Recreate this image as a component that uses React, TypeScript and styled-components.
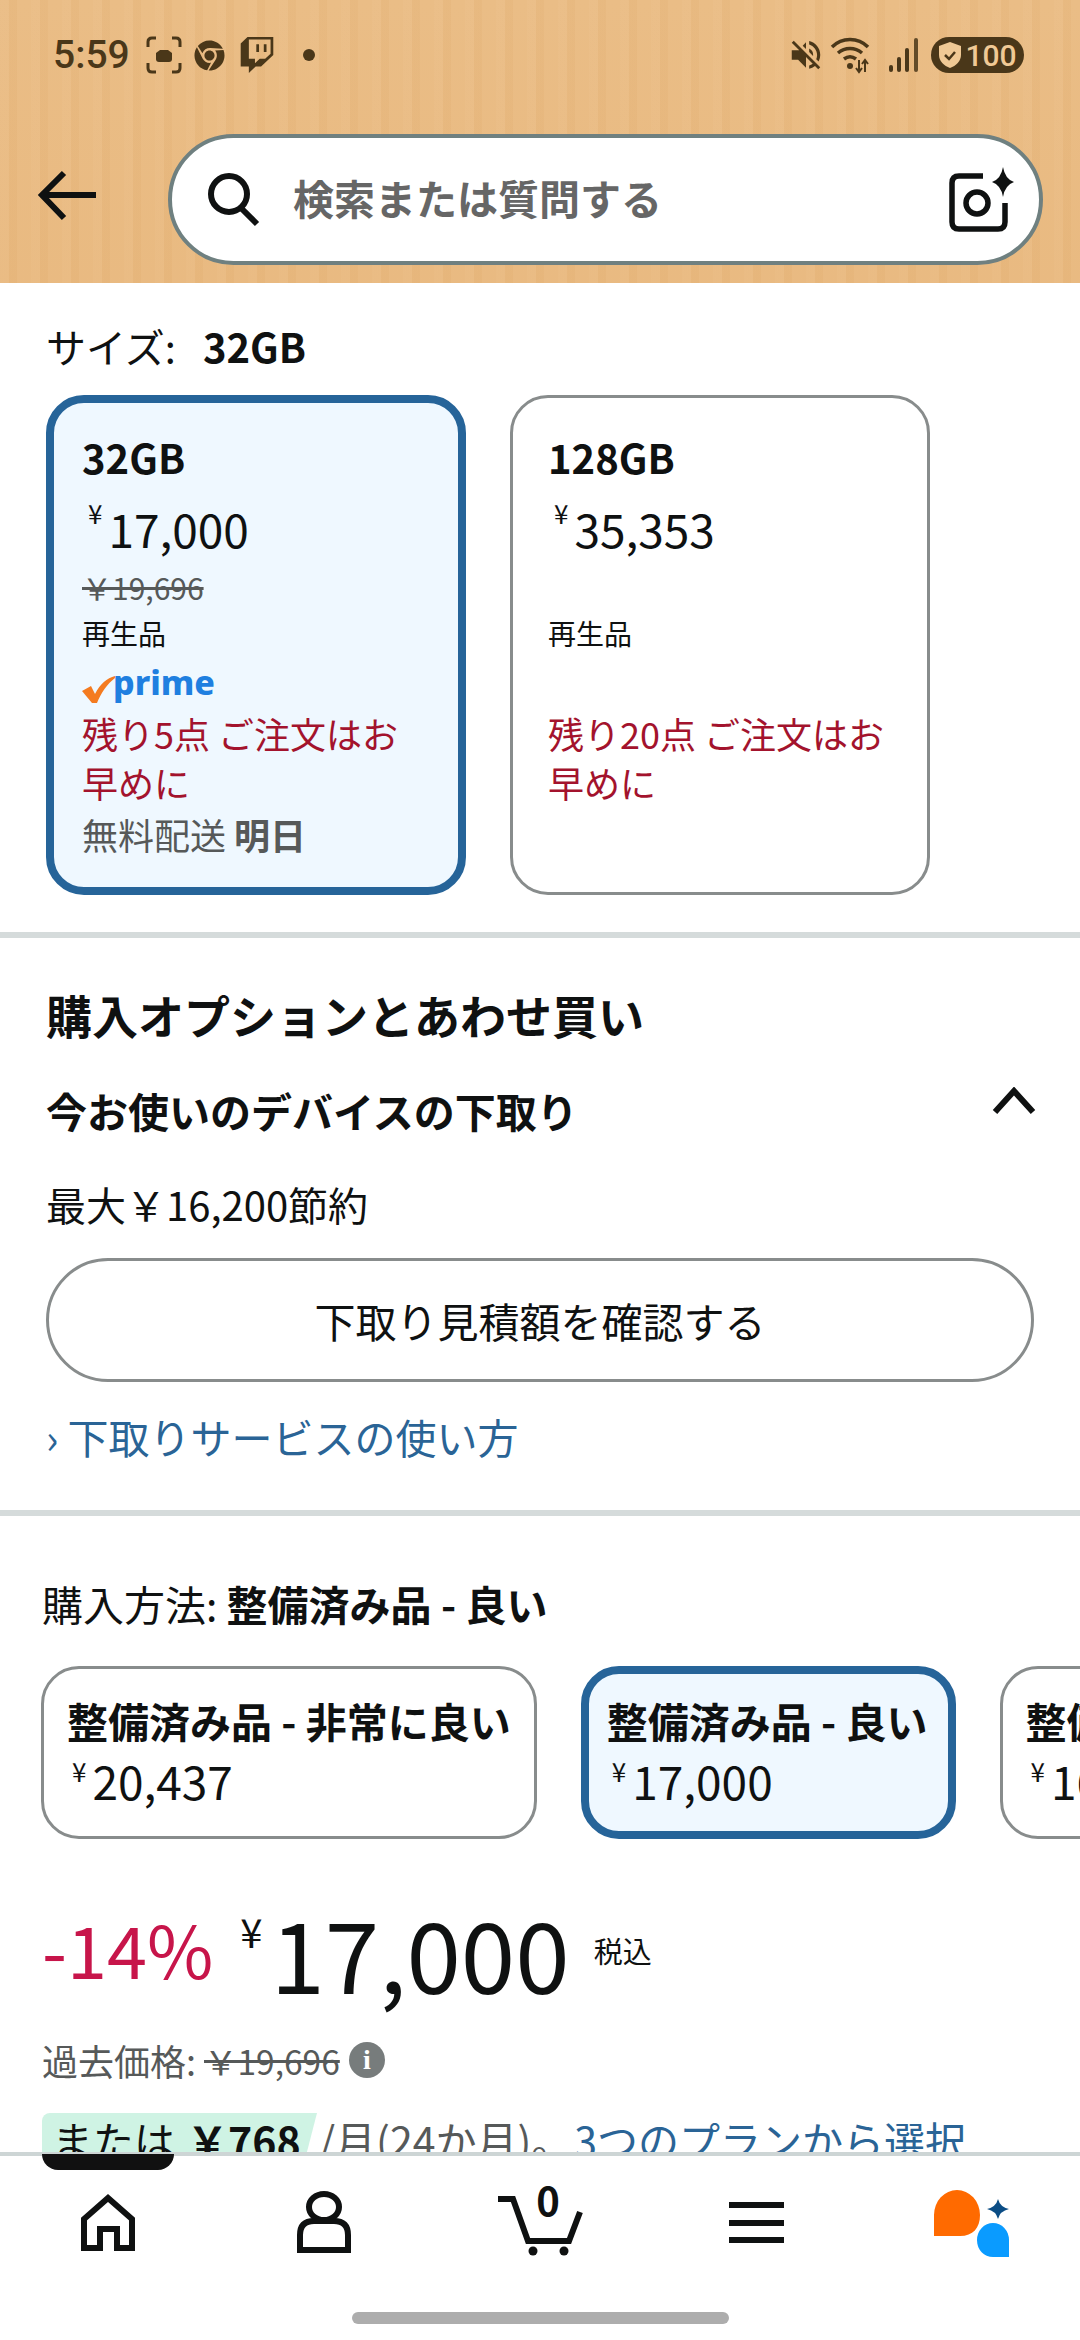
import React from "react";
import styled, { createGlobalStyle } from "styled-components";
import { FaChrome, FaTwitch } from "react-icons/fa";
import { MdVolumeOff } from "react-icons/md";

const GlobalStyle = createGlobalStyle`
  html, body {
    margin: 0;
    padding: 0;
    background: #fff;
  }
  * {
    box-sizing: border-box;
  }
`;

const Page = styled.div`
  width: 1080px;
  height: 2340px;
  display: flex;
  flex-direction: column;
  overflow: hidden;
  position: relative;
  background: #fff;
  color: #0f1111;
  font-family: "Noto Sans CJK JP", "Noto Sans", sans-serif;
`;

/* header */
const Header = styled.header`
  height: 283px;
  flex: none;
  background:
    repeating-linear-gradient(90deg, rgba(255, 255, 255, 0.04) 0 9px, rgba(160, 100, 30, 0.03) 9px 17px, rgba(255, 255, 255, 0.02) 17px 31px),
    linear-gradient(180deg, #eabc84 0%, #e9b97f 100%);
`;

const StatusBar = styled.div`
  height: 134px;
  padding: 36px 56px 0 53px;
  display: flex;
  align-items: flex-start;
  justify-content: space-between;
  color: #4a3719;
`;

const StatusGroup = styled.div`
  display: flex;
  align-items: center;
  height: 38px;
`;

const Clock = styled.span`
  font-family: "Roboto", sans-serif;
  font-size: 39px;
  font-weight: 500;
  line-height: 38px;
  margin-right: 16px;
`;

const Dot = styled.span`
  width: 12px;
  height: 12px;
  border-radius: 50%;
  background: #4a3719;
  margin-left: 28px;
`;

const StatusGap = styled.span<{ $width: number }>`
  width: ${(p) => p.$width}px;
`;

const BatteryPill = styled.div`
  width: 93px;
  height: 36px;
  margin-left: 12px;
  border-radius: 18px;
  background: #4a3719;
  color: #f0c995;
  display: flex;
  align-items: center;
  justify-content: center;
  gap: 3px;
  font-family: "Roboto", sans-serif;
  font-size: 30px;
  font-weight: 500;
`;

const SearchRow = styled.div`
  display: flex;
  align-items: center;
  padding-left: 36px;
  gap: 70px;
`;

const SearchBox = styled.div`
  width: 875px;
  height: 131px;
  margin-left: -2px;
  border: 4px solid #6f8080;
  border-radius: 66px;
  background: #fff;
  display: flex;
  align-items: center;
  padding: 0 24px 0 36px;
`;

const SearchText = styled.span`
  margin: 0 0 6px 33px;
  flex: 1;
  font-size: 41px;
  font-weight: 700;
  color: #666;
  line-height: 50px;
`;

/* size section */
const SizeSection = styled.section`
  padding: 43px 46px 37px;
  flex: none;
`;

const SizeLabel = styled.div`
  font-size: 40px;
  line-height: 40px;
  display: flex;
  gap: 27px;
`;

const Strong = styled.span`
  font-weight: 700;
`;

const SizeCards = styled.div`
  margin-top: 29px;
  display: flex;
  gap: 44px;
`;

const SizeCard = styled.div<{ $selected?: boolean }>`
  width: 420px;
  height: 500px;
  border-radius: 38px;
  border: ${(p) => (p.$selected ? "8px solid #266499" : "3px solid #888c8c")};
  background: ${(p) => (p.$selected ? "#eff8ff" : "#fff")};
  padding: ${(p) => (p.$selected ? "26px 30px 0 28px" : "31px 30px 0 35px")};
`;

const SizeName = styled.div`
  font-size: 40px;
  font-weight: 700;
  line-height: 56px;
`;

const PriceLine = styled.div`
  display: flex;
  align-items: flex-start;
  height: 86px;
  font-size: 46px;
  line-height: 86px;
  padding-left: 6px;
`;

const Yen = styled.span`
  font-size: 26px;
  line-height: 56px;
  margin-right: 6px;
`;

const OldPrice = styled.div`
  height: 28px;
  margin-top: 2px;
  font-size: 30px;
  line-height: 28px;
  color: #565959;
  text-decoration: line-through;
`;

const Condition = styled.div`
  height: 64px;
  font-size: 28px;
  line-height: 64px;
`;

const PrimeRow = styled.div`
  height: 38px;
  margin-top: 2px;
  display: flex;
`;

const Stock = styled.div`
  margin-top: 4px;
  font-size: 36px;
  line-height: 49px;
  color: #a3132d;
`;

const Delivery = styled.div`
  margin-top: 2px;
  font-size: 36px;
  line-height: 50px;
  color: #565959;
`;

const Divider = styled.div`
  height: 6px;
  flex: none;
  background: #d5dbdb;
`;

/* trade-in section */
const TradeSection = styled.section`
  padding: 48px 46px 49px;
  flex: none;
`;

const SectionTitle = styled.h2`
  margin: 0;
  font-size: 46px;
  font-weight: 700;
  line-height: 56px;
`;

const TradeHead = styled.div`
  margin-top: 43px;
  display: flex;
  justify-content: space-between;
  align-items: flex-start;
  font-size: 41px;
  font-weight: 700;
  line-height: 50px;
`;

const Saving = styled.div`
  margin-top: 44px;
  font-size: 40px;
  line-height: 50px;
`;

const TradeButton = styled.div`
  margin-top: 29px;
  height: 124px;
  border: 3px solid #888c8c;
  border-radius: 62px;
  display: flex;
  align-items: center;
  justify-content: center;
  font-size: 41px;
`;

const HelpLink = styled.div`
  margin-top: 29px;
  font-size: 41px;
  line-height: 50px;
  color: #2a6496;
`;

/* buying options */
const BuySection = styled.section`
  padding-top: 62px;
  flex: none;
`;

const BuyLabel = styled.div`
  padding-left: 42px;
  font-size: 41px;
  line-height: 50px;
`;

const BuyCards = styled.div`
  margin-top: 38px;
  padding-left: 41px;
  display: flex;
  gap: 44px;
`;

const BuyCard = styled.div<{ $selected?: boolean }>`
  flex: none;
  height: 173px;
  border-radius: 38px;
  border: ${(p) => (p.$selected ? "8px solid #266499" : "3px solid #888c8c")};
  background: ${(p) => (p.$selected ? "#eff8ff" : "#fff")};
  padding: ${(p) => (p.$selected ? "21px 20px 0 18px" : "26px 23px 0 23px")};
`;

const BuyName = styled.div`
  font-size: 41px;
  font-weight: 700;
  line-height: 50px;
  white-space: nowrap;
`;

const BuyPrice = styled.div`
  margin-top: 5px;
  padding-left: 5px;
  display: flex;
  align-items: flex-start;
  font-size: 46px;
  line-height: 60px;
`;

const BuyYen = styled.span`
  font-size: 26px;
  line-height: 42px;
  margin-right: 6px;
`;

/* main price */
const PriceRow = styled.div`
  margin-top: 51px;
  padding-left: 42px;
  display: flex;
  align-items: flex-start;
  height: 122px;
`;

const Discount = styled.span`
  font-size: 72px;
  line-height: 90px;
  margin-top: 13px;
  color: #c7154a;
`;

const BigYen = styled.span`
  font-size: 40px;
  line-height: 50px;
  margin: 16px 8px 0 27px;
`;

const BigPrice = styled.span`
  font-size: 98px;
  line-height: 122px;
`;

const TaxNote = styled.span`
  font-size: 29px;
  line-height: 40px;
  margin: 40px 0 0 24px;
`;

const ListPriceRow = styled.div`
  margin-top: 23px;
  padding-left: 42px;
  display: flex;
  align-items: center;
  height: 50px;
  font-size: 36px;
  color: #565959;
`;

const Struck = styled.span`
  margin-left: 8px;
  font-size: 33.5px;
  text-decoration: line-through;
`;

const InfoBadge = styled.span`
  width: 36px;
  height: 36px;
  margin-left: 9px;
  border-radius: 50%;
  background: #777c7c;
  color: #fff;
  display: flex;
  align-items: center;
  justify-content: center;
  font-family: "Liberation Serif", serif;
  font-size: 28px;
  font-weight: 700;
`;

const InstallmentRow = styled.div`
  margin-top: 28px;
  padding-left: 42px;
  display: flex;
  align-items: flex-start;
  white-space: nowrap;
  font-size: 41px;
  line-height: 50px;
  color: #565959;
`;

const GreenTag = styled.span`
  height: 64px;
  width: 275px;
  padding: 1px 0 0 10px;
  background: #cff3e4;
  color: #0f1111;
  border-radius: 8px 0 0 0;
  clip-path: polygon(0 0, 100% 0, 94% 100%, 0 100%);
  display: flex;
  gap: 12px;
`;

const PlanLink = styled.span`
  color: #2a6496;
`;

const MonthText = styled.span`
  margin: 1px 0 0 2px;
`;

const Main = styled.main`
  height: 1869px;
  flex: none;
  overflow: hidden;
`;

/* bottom nav */
const BottomNav = styled.nav`
  flex: 1;
  position: relative;
  border-top: 4px solid #cdd5d5;
  background: #fff;
  display: grid;
  grid-template-columns: repeat(5, 216px);
  justify-items: center;
  align-items: start;
  padding-top: 29px;
`;

const NavPill = styled.div`
  position: absolute;
  left: 42px;
  top: -2px;
  width: 132px;
  height: 16px;
  border-radius: 0 0 16px 16px;
  background: #111;
`;

const HomeBar = styled.div`
  position: absolute;
  left: 352px;
  bottom: 16px;
  width: 377px;
  height: 12px;
  border-radius: 6px;
  background: #adadad;
`;

function PrimeLogo() {
  return (
    <svg width="135" height="38" viewBox="0 0 135 38">
      <path d="M0 24 L9 19 L13 27 C18 17 25 11 33 9 L33 11 C25 17 19 26 15 36 H10 Z" fill="#f47b20" />
      <text x="31" y="28" fontFamily="Noto Sans, sans-serif" fontSize="34" fontWeight="800" fill="#1f7fe0">
        prime
      </text>
    </svg>
  );
}

function ScreenshotIcon() {
  return (
    <svg width="36" height="38" viewBox="0 0 36 38" fill="none" stroke="currentColor" strokeWidth="3">
      <path d="M2 11V6q0-4 4-4h4M26 2h4q4 0 4 4v5M34 27v5q0 4-4 4h-4M10 36H6q-4 0-4-4v-5" />
      <path d="M10 17l4-3h8l4 3v6q0 3-3 3H13q-3 0-3-3z" fill="currentColor" stroke="none" />
    </svg>
  );
}

function WifiIcon() {
  return (
    <svg width="43" height="38" viewBox="0 0 43 38" fill="none" stroke="currentColor" strokeWidth="3.5">
      <path d="M2 11C12 1 28 1 38 11M8 17c7-6 17-6 24 0M14 23c4-3 8-3 12 0" />
      <circle cx="20" cy="30" r="3" fill="currentColor" stroke="none" />
      <path d="M29 24v12M35 36V24M32 28l3-4 3 4M26 32l3 4 3-4" strokeWidth="2" />
    </svg>
  );
}

function SignalIcon() {
  return (
    <svg width="30" height="38" viewBox="0 0 30 38" fill="currentColor">
      <rect x="0" y="29" width="4" height="7" rx="2" />
      <rect x="8" y="21" width="4" height="15" rx="2" />
      <rect x="16" y="12" width="4" height="24" rx="2" />
      <rect x="25" y="2" width="4" height="34" rx="2" opacity="0.85" />
    </svg>
  );
}

function ShieldIcon() {
  return (
    <svg width="24" height="28" viewBox="0 0 24 28">
      <path d="M12 1l11 4v9c0 6-5 11-11 13C6 25 1 20 1 14V5z" fill="#f0c995" />
      <path d="M7 14l4 4 6-7" fill="none" stroke="#4a3719" strokeWidth="2.5" />
    </svg>
  );
}

function BackArrow() {
  return (
    <svg width="64" height="60" viewBox="0 0 64 60" fill="none" stroke="#0f1111" strokeWidth="6">
      <path d="M60 25H8" />
      <path d="M28 3L6 25l22 23" />
    </svg>
  );
}

function SearchIcon() {
  return (
    <svg width="52" height="54" viewBox="0 0 52 54" fill="none" stroke="#0f1111" strokeWidth="6">
      <ellipse cx="21" cy="21" rx="18" ry="18" />
      <path d="M33 35l16 16" />
    </svg>
  );
}

function CameraIcon() {
  return (
    <svg width="66" height="66" viewBox="0 0 66 66" fill="none" stroke="#0f1111" strokeWidth="5.5">
      <path d="M34 9H10q-7 0-7 7v39q0 7 7 7h39q7 0 7-7V36" />
      <circle cx="28" cy="36" r="11" />
      <path d="M54 0q2 12 11 15q-9 3-11 15q-2-12-11-15q9-3 11-15z" fill="#0f1111" stroke="none" />
    </svg>
  );
}

function ChevronUp() {
  return (
    <svg width="44" height="28" viewBox="0 0 44 28" fill="none" stroke="#0f1111" strokeWidth="6" style={{ marginTop: 2, marginRight: -2 }}>
      <path d="M3 25L22 4l19 21" />
    </svg>
  );
}

function HomeNavIcon() {
  return (
    <svg width="90" height="80" viewBox="0 0 90 80" fill="none" stroke="#0f1111" strokeWidth="6">
      <path d="M21 63V34L45 13l24 21v29H54V44H37v19z" />
    </svg>
  );
}

function PersonNavIcon() {
  return (
    <svg width="90" height="80" viewBox="0 0 90 80" fill="none" stroke="#0f1111" strokeWidth="6">
      <ellipse cx="45" cy="22" rx="15" ry="13" />
      <path d="M21 65V50q0-14 14-14h20q14 0 14 14v15z" />
    </svg>
  );
}

function CartNavIcon() {
  return (
    <svg width="90" height="80" viewBox="0 0 90 80" fill="none" stroke="#0f1111" strokeWidth="6">
      <path d="M3 14h15l15 42h41l11-29" />
      <circle cx="38" cy="66" r="4.5" fill="#0f1111" stroke="none" />
      <circle cx="69" cy="66" r="4.5" fill="#0f1111" stroke="none" />
      <text x="53" y="31" textAnchor="middle" fontFamily="Noto Sans CJK JP, sans-serif" fontSize="40" fontWeight="700" fill="#0f1111" stroke="none">
        0
      </text>
    </svg>
  );
}

function MenuNavIcon() {
  return (
    <svg width="90" height="80" viewBox="0 0 90 80" fill="#0f1111">
      <rect x="18" y="17" width="55" height="6" />
      <rect x="18" y="35" width="55" height="6" />
      <rect x="18" y="52" width="55" height="6" />
    </svg>
  );
}

function AlexaNavIcon() {
  return (
    <svg width="90" height="80" viewBox="0 0 90 80">
      <path d="M7 30A23 25 0 0 1 53 30C53 43 46 51 33 51H7Z" fill="#ff6a00" />
      <path d="M66 38A16 17 0 0 0 50 55C50 65 57 72 66 72H82V55A16 17 0 0 0 66 38Z" fill="#0a9bff" />
      <path d="M71 14q2 8 11 10q-9 2-11 10q-2-8-11-10q9-2 11-10z" fill="#0b4d85" />
    </svg>
  );
}

export default function App() {
  return (
    <Page>
      <GlobalStyle />
      <Header>
        <StatusBar>
          <StatusGroup>
            <Clock>5:59</Clock>
            <ScreenshotIcon />
            <StatusGap $width={12} />
            <FaChrome size={31} />
            <StatusGap $width={14} />
            <FaTwitch size={36} />
            <Dot />
          </StatusGroup>
          <StatusGroup>
            <MdVolumeOff size={38} />
            <StatusGap $width={5} />
            <WifiIcon />
            <StatusGap $width={16} />
            <SignalIcon />
            <BatteryPill>
              <ShieldIcon />
              100
            </BatteryPill>
          </StatusGroup>
        </StatusBar>
        <SearchRow>
          <BackArrow />
          <SearchBox>
            <SearchIcon />
            <SearchText>検索または質問する</SearchText>
            <CameraIcon />
          </SearchBox>
        </SearchRow>
      </Header>

      <Main>
        <SizeSection>
          <SizeLabel>
            <span>サイズ:</span>
            <Strong>32GB</Strong>
          </SizeLabel>
          <SizeCards>
            <SizeCard $selected>
              <SizeName>32GB</SizeName>
              <PriceLine>
                <Yen>¥</Yen>17,000
              </PriceLine>
              <OldPrice>￥19,696</OldPrice>
              <Condition>再生品</Condition>
              <PrimeRow>
                <PrimeLogo />
              </PrimeRow>
              <Stock>残り5点 ご注文はお早めに</Stock>
              <Delivery>
                無料配送 <Strong>明日</Strong>
              </Delivery>
            </SizeCard>
            <SizeCard>
              <SizeName>128GB</SizeName>
              <PriceLine>
                <Yen>¥</Yen>35,353
              </PriceLine>
              <OldPrice />
              <Condition>再生品</Condition>
              <PrimeRow />
              <Stock>残り20点 ご注文はお早めに</Stock>
            </SizeCard>
          </SizeCards>
        </SizeSection>
        <Divider />

        <TradeSection>
          <SectionTitle>購入オプションとあわせ買い</SectionTitle>
          <TradeHead>
            今お使いのデバイスの下取り
            <ChevronUp />
          </TradeHead>
          <Saving>最大￥16,200節約</Saving>
          <TradeButton>下取り見積額を確認する</TradeButton>
          <HelpLink>› 下取りサービスの使い方</HelpLink>
        </TradeSection>
        <Divider />

        <BuySection>
          <BuyLabel>
            購入方法: <Strong>整備済み品 - 良い</Strong>
          </BuyLabel>
          <BuyCards>
            <BuyCard>
              <BuyName>整備済み品 - 非常に良い</BuyName>
              <BuyPrice>
                <BuyYen>¥</BuyYen>20,437
              </BuyPrice>
            </BuyCard>
            <BuyCard $selected>
              <BuyName>整備済み品 - 良い</BuyName>
              <BuyPrice>
                <BuyYen>¥</BuyYen>17,000
              </BuyPrice>
            </BuyCard>
            <BuyCard>
              <BuyName>整備済み品 - 可</BuyName>
              <BuyPrice>
                <BuyYen>¥</BuyYen>16,000
              </BuyPrice>
            </BuyCard>
          </BuyCards>
          <PriceRow>
            <Discount>-14%</Discount>
            <BigYen>¥</BigYen>
            <BigPrice>17,000</BigPrice>
            <TaxNote>税込</TaxNote>
          </PriceRow>
          <ListPriceRow>
            過去価格:
            <Struck>￥19,696</Struck>
            <InfoBadge>i</InfoBadge>
          </ListPriceRow>
          <InstallmentRow>
            <GreenTag>
              <span>または</span>
              <Strong>￥768</Strong>
            </GreenTag>
            <MonthText>/月(24か月)。</MonthText>
            <MonthText>
              <PlanLink>3つのプランから選択</PlanLink>
            </MonthText>
          </InstallmentRow>
        </BuySection>
      </Main>

      <BottomNav>
        <NavPill />
        <HomeNavIcon />
        <PersonNavIcon />
        <CartNavIcon />
        <MenuNavIcon />
        <AlexaNavIcon />
        <HomeBar />
      </BottomNav>
    </Page>
  );
}
